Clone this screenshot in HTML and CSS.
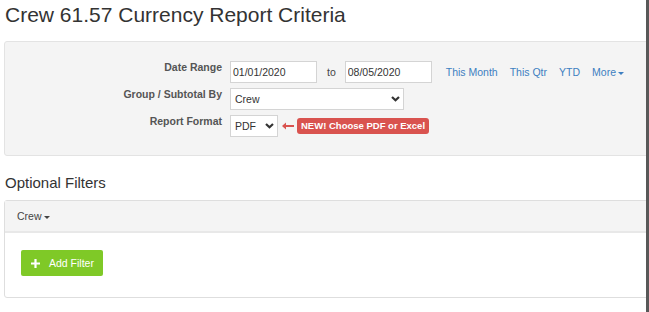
FILE: index.html
```html
<!DOCTYPE html>
<html lang="en">
<head>
    <meta charset="UTF-8">
    <meta name="viewport" content="width=device-width, initial-scale=1.0">
    <title>Crew Currency Report Criteria</title>
    <link rel="stylesheet" href="styles.css">
</head>
<body>
    <div class="page">
        <h1 class="title">Crew 61.57 Currency Report Criteria</h1>

        <div class="criteria">
            <div class="row">
                <label class="row-label">Date Range</label>
                <div class="controls">
                    <input class="field date" type="text" value="01/01/2020">
                    <span class="to">to</span>
                    <input class="field date" type="text" value="08/05/2020">
                    <a class="quick first" href="#">This Month</a>
                    <a class="quick" href="#">This Qtr</a>
                    <a class="quick" href="#">YTD</a>
                    <a class="quick" href="#">More<span class="caret blue"></span></a>
                </div>
            </div>
            <div class="row">
                <label class="row-label">Group / Subtotal By</label>
                <div class="controls">
                    <div class="select-wrap wide">
                        <select class="field select">
                            <option>Crew</option>
                        </select>
                        <svg class="chevron" width="9" height="6" viewBox="0 0 9 6"><polyline points="1,1 4.5,4.3 8,1" fill="none" stroke="#333" stroke-width="2.2"/></svg>
                    </div>
                </div>
            </div>
            <div class="row">
                <label class="row-label">Report Format</label>
                <div class="controls">
                    <div class="select-wrap narrow">
                        <select class="field select">
                            <option>PDF</option>
                            <option>Excel</option>
                        </select>
                        <svg class="chevron" width="9" height="6" viewBox="0 0 9 6"><polyline points="1,1 4.5,4.3 8,1" fill="none" stroke="#333" stroke-width="2.2"/></svg>
                    </div>
                    <svg class="arrow" width="12" height="8" viewBox="0 0 12 8"><path d="M3 4H12" stroke="#d9534f" stroke-width="2"/><path d="M0 4L4 0.5V7.5Z" fill="#d9534f"/></svg>
                    <span class="badge">NEW! Choose PDF or Excel</span>
                </div>
            </div>
        </div>

        <h2 class="section-title">Optional Filters</h2>

        <div class="filters">
            <div class="filters-head">Crew<span class="caret"></span></div>
            <div class="filters-body">
                <button class="add-btn">
                    <svg width="9" height="9" viewBox="0 0 9 9"><path d="M3.4 0h2.2v3.4H9v2.2H5.6V9H3.4V5.6H0V3.4h3.4z" fill="#fff"/></svg>
                    Add Filter
                </button>
            </div>
        </div>
    </div>
</body>
</html>
```

FILE: styles.css
```css
body {
    margin: 0;
    font-family: "Liberation Sans", Arial, sans-serif;
    font-size: 10.5px;
    color: #333;
    background: #fff;
}
.page {
    width: 649px;
    height: 312px;
    box-sizing: border-box;
    padding-left: 4px;
    border-right: 3px solid #585858;
    overflow: hidden;
}
.title {
    margin: 3px 0 14px 1px;
    font-size: 21px;
    line-height: 24px;
    font-weight: normal;
    color: #333;
}

/* Criteria panel */
.criteria {
    margin-right: -6px;
    background: #f4f4f4;
    border: 1px solid #e3e3e3;
    border-radius: 3px;
    padding: 19px 0 18px;
    display: flex;
    flex-direction: column;
    gap: 5px;
}
.row {
    display: flex;
    align-items: flex-start;
    gap: 8px;
}
.row-label {
    width: 217px;
    text-align: right;
    font-weight: bold;
    color: #555;
    line-height: 12px;
}
.controls {
    display: flex;
    align-items: center;
    height: 22px;
}
.field {
    box-sizing: border-box;
    height: 22px;
    border: 1px solid #d4d4d4;
    background: #fff;
    font: inherit;
    font-size: 10.5px;
    color: #333;
    border-radius: 0;
    outline: none;
}
.date {
    width: 87px;
    padding: 0 2px;
}
.to {
    margin: 0 9px 0 10px;
    color: #444;
}
.quick {
    margin-left: 12px;
    color: #3d7fc1;
    text-decoration: none;
}
.quick.first {
    margin-left: 14px;
}
.caret {
    display: inline-block;
    margin-left: 2px;
    vertical-align: middle;
    border-left: 3px solid transparent;
    border-right: 3px solid transparent;
    border-top: 3px solid #444;
}
.caret.blue {
    border-top-color: #3d7fc1;
}
.select-wrap {
    position: relative;
    height: 22px;
}
.select {
    appearance: none;
    -webkit-appearance: none;
    width: 100%;
    padding: 0 0 0 4px;
}
.select-wrap.wide {
    width: 174px;
}
.select-wrap.narrow {
    width: 48px;
}
.chevron {
    position: absolute;
    right: 4px;
    top: 8px;
    pointer-events: none;
}
.arrow {
    margin: 0 3px 0 4px;
}
.badge {
    height: 16px;
    line-height: 16px;
    padding: 0 4px;
    background: #d9534f;
    color: #fff;
    font-weight: bold;
    font-size: 9.5px;
    border-radius: 3px;
}

/* Optional filters */
.section-title {
    margin: 18px 0 8px 1px;
    font-size: 15px;
    line-height: 18px;
    font-weight: normal;
    color: #333;
}
.filters {
    margin-right: -6px;
    border: 1px solid #dedede;
    border-radius: 3px;
}
.filters-head {
    height: 30px;
    line-height: 30px;
    padding: 0 12px;
    background: #f4f4f4;
    border-bottom: 2px solid #e8e8e8;
    color: #444;
}
.filters-body {
    padding: 17px 16px 21px;
}
.add-btn {
    display: flex;
    align-items: center;
    gap: 9px;
    height: 26px;
    width: 82px;
    padding: 0 0 0 10px;
    border: none;
    border-radius: 2px;
    background: #7fc927;
    color: #fff;
    font: inherit;
    font-size: 10.5px;
    cursor: pointer;
}
```
